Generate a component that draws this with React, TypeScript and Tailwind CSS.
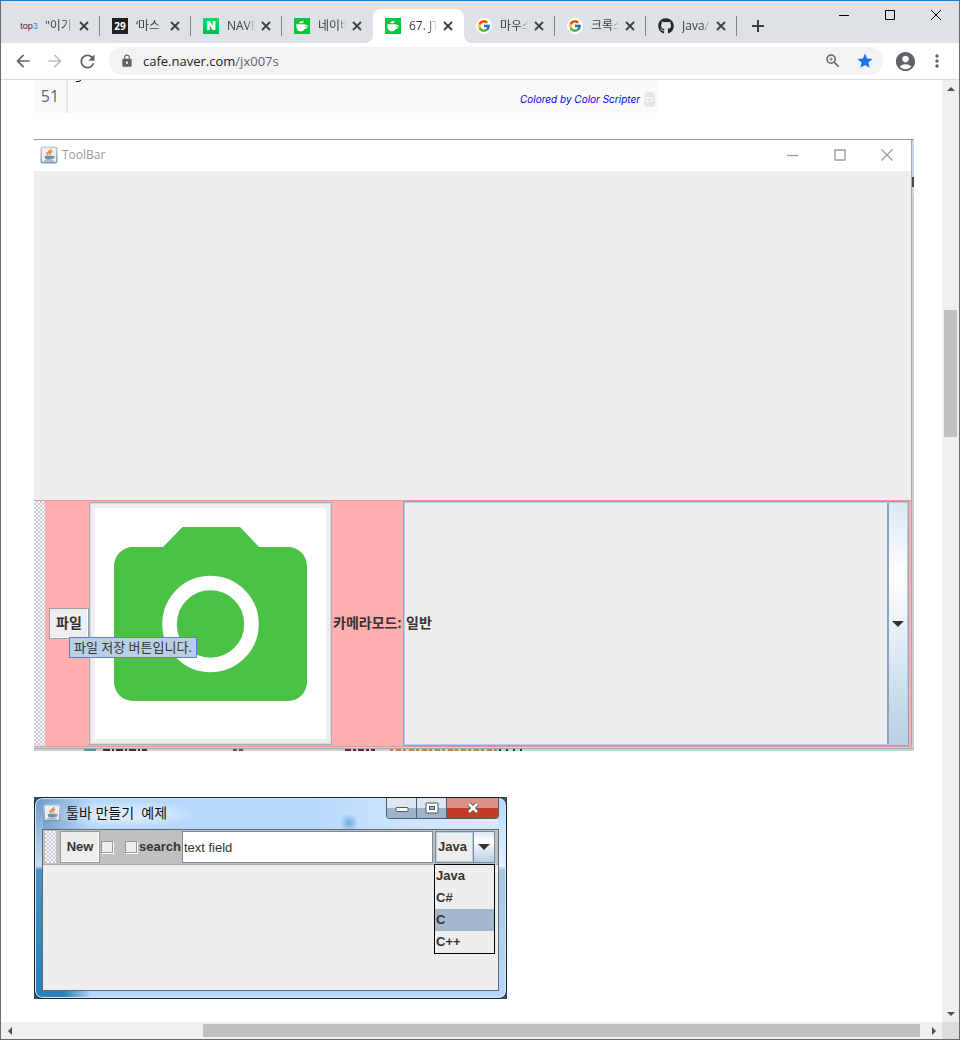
import type { ReactNode } from 'react';
import {
  MdArrowBack,
  MdArrowForward,
  MdRefresh,
  MdLock,
  MdZoomIn,
  MdStar,
  MdAccountCircle,
  MdMoreVert,
} from 'react-icons/md';
import { FcGoogle } from 'react-icons/fc';
import { FaGithub } from 'react-icons/fa';

const grip =
  'bg-[#f4f4f4] bg-[conic-gradient(#c6ccd1_25%,#f8f8f8_0_50%,#c6ccd1_0_75%,#f8f8f8_0)] bg-[size:4px_4px]';

function CafeIcon() {
  return (
    <svg viewBox="0 0 16 16" className="size-4 shrink-0" aria-hidden="true">
      <rect width="16" height="16" fill="#03c73c" />
      <path
        d="M2.4 6.2h9v.9c1.2-.5 2.4 0 2.3 1.2-.1 1.5-1.5 2.5-3 2.7-.9 1.6-2.1 2.3-3.8 2.3-2.9 0-4.5-2.2-4.5-5.3z"
        fill="#fff"
      />
      <circle cx="12" cy="8.5" r=".7" fill="#03c73c" />
      <path d="M5.2 5.200c.1-1.700 1.500-1.200 1.900-2.500.9.9 1.800.4 2.500-.2.1 1.700-.6 2.700-2 2.700z" fill="#fff" />
    </svg>
  );
}

function JavaIcon() {
  return (
    <svg viewBox="0 0 18 18" className="size-[18px] shrink-0" aria-hidden="true">
      <defs>
        <linearGradient id="javaFrame" x1="0" y1="0" x2="0" y2="1">
          <stop offset="0" stopColor="#c3d2df" />
          <stop offset="1" stopColor="#8096a8" />
        </linearGradient>
      </defs>
      <rect x=".5" y=".5" width="17" height="17" rx="2" fill="url(#javaFrame)" />
      <rect x="2" y="2" width="14" height="14" rx="1" fill="#eef1f4" />
      <path
        d="M10.800 3c.6 1.600-3.800 2.500-2.300 4.800M12.300 5.300c-2.200.9-3 1.700-2 3.600M7.300 6.300c-.7 1-.2 1.900.7 2.700"
        stroke="#ee8a3a"
        strokeWidth="1.600"
        fill="none"
      />
      <path d="M4.800 9.800h8v1.700c0 1.500-1.300 2.200-4 2.200s-4-.7-4-2.200z" fill="#6f8ea8" />
      <path d="M12.500 10.300c2.500-.4 2.200 2.200-.4 2.400M3.800 15h10" stroke="#6f8ea8" strokeWidth="1.200" fill="none" />
    </svg>
  );
}

function GoogleIcon() {
  return (
    <span className="flex size-4 shrink-0 items-center justify-center rounded-full bg-white">
      <FcGoogle size={14} />
    </span>
  );
}

function TabItem({ icon, title, active = false, divider = true }: {
  icon: ReactNode;
  title: string;
  active?: boolean;
  divider?: boolean;
}) {
  return (
    <div
      role="tab"
      aria-selected={active}
      className={
        'relative flex h-[34px] w-[91px] shrink-0 items-center pl-3 pr-2 ' + (active ? 'rounded-t-lg bg-white' : '')
      }
    >
      {icon}
      <span className="ml-2 w-7 overflow-hidden whitespace-nowrap text-[12px] leading-4 text-[#3c4043] [mask-image:linear-gradient(to_right,black_70%,transparent)]">
        {title}
      </span>
      <button aria-label="Close tab" className="ml-auto flex size-4 items-center justify-center">
        <svg viewBox="0 0 10 10" className="size-[10px]">
          <path d="M1 1l8 8M9 1L1 9" stroke="#3c4043" strokeWidth="1.800" />
        </svg>
      </button>
      {divider && <span className="absolute right-0 top-[7px] h-5 w-px bg-[#80868b]" />}
      {active && (
        <svg viewBox="0 0 107 8" className="absolute -left-2 bottom-0 h-2 w-[107px]" aria-hidden="true">
          <path d="M0 8a8 8 0 0 0 8-8v8zM107 8a8 8 0 0 1-8-8v8z" fill="#fff" />
        </svg>
      )}
    </div>
  );
}

function TabStrip() {
  return (
    <header className="flex h-[42px] items-start justify-between bg-[#dee1e6]">
      <div className="flex items-center pl-2 pt-2" role="tablist">
        <TabItem
          icon={
            <span className="flex size-4 shrink-0 items-center justify-center font-['Liberation_Sans',sans-serif] text-[9px] leading-4 text-[#333]">
              top<span className="text-[#2f7df6]">3</span>
            </span>
          }
          title={'"이기'}
        />
        <TabItem
          icon={
            <span className="flex size-4 shrink-0 items-center justify-center bg-[#231f20] text-[10px] font-bold leading-4 text-white">
              29
            </span>
          }
          title="‘마스"
        />
        <TabItem
          icon={
            <span className="flex size-4 shrink-0 items-center justify-center bg-linear-to-b from-[#06e06a] to-[#08b955] font-[Inter] text-[12px] font-black leading-4 text-white">
              N
            </span>
          }
          title="NAVE"
        />
        <TabItem icon={<CafeIcon />} title="네이버" divider={false} />
        <TabItem icon={<CafeIcon />} title="67. JT" active divider={false} />
        <TabItem icon={<GoogleIcon />} title="마우스" />
        <TabItem icon={<GoogleIcon />} title="크록스" />
        <TabItem icon={<FaGithub className="size-4 shrink-0 text-[#24292e]" />} title="Java/" />
        <button aria-label="New tab" className="ml-[11px] flex size-5 items-center justify-center">
          <svg viewBox="0 0 12 12" className="size-3">
            <path d="M6 0v12M0 6h12" stroke="#3c4043" strokeWidth="2" />
          </svg>
        </button>
      </div>
      <div className="flex">
        <button aria-label="Minimize" className="flex h-7 w-[46px] items-center justify-center">
          <svg viewBox="0 0 10 10" className="size-[10px]"><path d="M0 5.500h10" stroke="#000" /></svg>
        </button>
        <button aria-label="Maximize" className="flex h-7 w-[46px] items-center justify-center">
          <svg viewBox="0 0 10 10" className="size-[10px]"><path d="M.5.5h9v9h-9z" fill="none" stroke="#000" /></svg>
        </button>
        <button aria-label="Close" className="flex h-7 w-[46px] items-center justify-center">
          <svg viewBox="0 0 10 10" className="size-[10px]"><path d="M0 0l10 10M10 0L0 10" stroke="#000" /></svg>
        </button>
      </div>
    </header>
  );
}

function AddressBar() {
  const nav = 'flex size-8 items-center justify-center text-[#5f6368]';
  return (
    <nav className="flex h-[37px] items-center border-b border-[#dadce0] bg-white px-[6px]">
      <button aria-label="Back" className={nav}><MdArrowBack size={20} /></button>
      <button aria-label="Forward" className="flex size-8 items-center justify-center text-[#bcbec1]">
        <MdArrowForward size={20} />
      </button>
      <button aria-label="Reload" className={nav}><MdRefresh size={21} /></button>
      <div className="mx-[6px] flex h-7 flex-1 items-center rounded-full bg-[#f1f3f4] pl-[11px] pr-[9px] text-[#5f6368]">
        <MdLock size={14} />
        <a href="#cafe" className="ml-[9px] flex-1 text-[13px] leading-5">
          <span className="text-[#202124]">cafe.naver.com</span>/jx007s
        </a>
        <button aria-label="Zoom" className="mr-[14px]"><MdZoomIn size={18} /></button>
        <button aria-label="Bookmark" className="text-[#1a73e8]"><MdStar size={18} /></button>
      </div>
      <button aria-label="Profile" className={nav}><MdAccountCircle size={23} /></button>
      <button aria-label="Menu" className={nav}><MdMoreVert size={20} /></button>
    </nav>
  );
}

function CodeTail() {
  return (
    <div className="relative flex h-[33px] w-[624px] rounded-b bg-[#fafafa]">
      <span className="w-[34px] border-r-2 border-[#e5e5e5] text-center text-[16px] leading-8 text-[#666]">51</span>
      <svg viewBox="0 0 5 2" className="ml-2 h-[2px] w-[5px]" aria-hidden="true">
        <path d="M5 0L3 1.500H0" stroke="#000" fill="none" />
      </svg>
      <div className="ml-auto flex items-center gap-1 pr-[3px] pt-[5px]">
        <a href="#scripter" className="font-[Inter,sans-serif] text-[10px] italic leading-4 text-[#0000ee]">
          Colored by Color Scripter
        </a>
        <span className="flex h-[15px] w-[11px] items-center justify-center rounded bg-[#e5e5e5] text-[9px] leading-3 text-white">
          cs
        </span>
      </div>
    </div>
  );
}

function ToolBarWindow() {
  return (
    <section className="w-[880px] border-t border-[#9598a0]">
      <div className="flex">
        <div className="min-w-0 flex-1">
          <div className="flex h-[31px] items-center bg-white pb-px pl-[6px] pr-px">
            <JavaIcon />
            <h2 className="ml-1 flex-1 text-[12px] leading-4 text-[#999]">ToolBar</h2>
            <button aria-label="Minimize" className="flex h-7 w-[47px] items-center justify-center">
              <svg viewBox="0 0 12 12" className="size-3"><path d="M0 6.500h11" stroke="#999" strokeWidth="1.300" /></svg>
            </button>
            <button aria-label="Maximize" className="flex h-7 w-[47px] items-center justify-center">
              <svg viewBox="0 0 12 12" className="size-3"><path d="M1 1h10v10H1z" fill="none" stroke="#999" strokeWidth="1.300" /></svg>
            </button>
            <button aria-label="Close" className="flex h-7 w-[47px] items-center justify-center">
              <svg viewBox="0 0 12 12" className="size-3"><path d="M.5.5l11 11M11.500.5l-11 11" stroke="#999" strokeWidth="1.300" /></svg>
            </button>
          </div>
          <div className="h-[329px] bg-[#eeeeee]" />
          <div className="flex h-[247px] items-center border-y border-[#e6999c] bg-[#ffafaf] pr-[2px]">
            <div className={'h-full w-[11px] ' + grip} />
            <div className="relative ml-1">
              <button className="h-[31px] w-10 border border-[#98a0a8] bg-[#eeeeee] pb-[2px] text-[14px] font-bold leading-5 text-[#333] shadow-[inset_-1px_-1px_0_#fff]">
                파일
              </button>
              <div
                role="tooltip"
                className="absolute left-5 top-[29px] z-10 h-[21px] whitespace-nowrap border border-[#6382bf] bg-[#b8cfe5] px-1 text-[13px] leading-[18px] text-[#333]"
              >
                파일 저장 버튼입니다.
              </div>
            </div>
            <button
              aria-label="Camera"
              className="flex h-[243px] w-[243px] items-center justify-center border border-[#a9b1b6] bg-[#eeeeee] shadow-[inset_0_0_0_1px_#d5dadd]"
            >
              <svg viewBox="0 0 231 231" className="size-[231px]">
                <rect width="231" height="231" fill="#fff" />
                <path
                  d="M38 39h30l19.500-20H145l19 20h29a19 19 0 0 1 19 19v116a19 19 0 0 1-19 19H38a19 19 0 0 1-19-19V58a19 19 0 0 1 19-19z"
                  fill="#4bc145"
                />
                <circle cx="115.500" cy="116" r="41" fill="none" stroke="#fff" strokeWidth="14.500" />
              </svg>
            </button>
            <label
              htmlFor="mode"
              className="w-[71px] whitespace-nowrap pb-[2px] pl-px text-[14px] font-bold leading-5 text-[#333]"
            >
              카메라모드:
            </label>
            <div className="flex h-full flex-1 border border-[#8ea6bd] bg-[#b8cfe5] p-px">
              <select
                id="mode"
                className="min-w-0 flex-1 appearance-none bg-[#eeeeee] pb-[2px] pl-px text-[14px] font-bold leading-5 text-[#333] outline-none"
              >
                <option>일반</option>
              </select>
              <span className="flex w-5 items-center justify-center border-l-2 border-[#8ea6bd] bg-linear-to-b from-[#dce7f3] via-white via-30% to-[#b8cfe5]">
                <svg viewBox="0 0 12 6" className="h-[6px] w-3"><path d="M0 0h12L6 6z" fill="#333" /></svg>
              </span>
            </div>
          </div>
        </div>
        <div className="w-[3px] border-l border-[#a8a8ac] bg-[linear-gradient(180deg,#cbd3e6_37px,#5a4040_37px_47px,#c6d6e8_47px_56px,#cccccc_56px)]" />
      </div>
      <svg viewBox="0 0 880 4" preserveAspectRatio="none" className="block h-1 w-full" aria-hidden="true">
        <rect width="880" height="4" fill="#d0d0d0" />
        <path d="M0 1.500h880" stroke="#a8a8a8" />
        <path d="M50 3h12" stroke="#4a9aa8" strokeWidth="2" />
        <path d="M69 3h44" stroke="#333" strokeWidth="2" strokeDasharray="7 2 2 2" />
        <path d="M199 3h10" stroke="#555" strokeWidth="2" strokeDasharray="4 2" />
        <path d="M311 3h30" stroke="#6a1f5a" strokeWidth="2" strokeDasharray="6 2 3 2" />
        <path d="M356 3h108" stroke="#cf7a4a" strokeWidth="2" strokeDasharray="3 3 5 2" />
        <path d="M465 3h28" stroke="#333" strokeWidth="2" strokeDasharray="2 5" />
      </svg>
    </section>
  );
}

function CheckSquare({ id, label }: { id: string; label: string }) {
  return (
    <input
      id={id}
      type="checkbox"
      aria-label={label}
      className="size-3 shrink-0 appearance-none border border-[#999] bg-[#eeeeee] shadow-[1px_1px_0_#fff]"
    />
  );
}

function ExampleWindow() {
  const languages = ['Java', 'C#', 'C', 'C++'];
  return (
    <section className="mt-[46px] w-[473px] bg-[#3a4d5e]">
      <div className="rounded-lg border border-[#17222c] px-[7px] pb-[7px] shadow-[inset_0_0_0_1px_#d3e9fc] [background:linear-gradient(180deg,#6f9ac9_0%,#c9def2_34%,#4a90c4_36%,#2a80b8_100%)_0_0/8px_100%_no-repeat,linear-gradient(180deg,#b7d8fb_0%,#e6f1fc_34%,#a9c6e0_36%,#b7d8fb_100%)_100%_0/8px_100%_no-repeat,linear-gradient(90deg,#2a80b8_0%,#2a80b8_6%,#b7d8fb_12%)_0_100%/100%_8px_no-repeat,radial-gradient(circle_at_314px_25px,#6ea9e2_0px,transparent_9px),radial-gradient(ellipse_at_90px_16px,rgba(255,255,255,0.5)_20%,transparent_60%)_0_0/180px_32px_no-repeat,linear-gradient(90deg,#6f9ac9_0%,#b7d8fb_12%,#b7d8fb_58%,#cfe6fd_80%,#d8ebfd_100%)]">
        <div className="flex h-[31px] items-start">
          <div className="flex flex-1 items-center pl-px pt-[5px]">
            <JavaIcon />
            <h2 className="ml-[5px] whitespace-pre text-[14px] leading-5 text-[#111]">툴바 만들기  예제</h2>
          </div>
          <div className="flex h-[21px] overflow-hidden rounded-b border border-t-0 border-[#4d5d6e]">
            <button
              aria-label="Minimize"
              className="flex w-[30px] items-center justify-center border-r border-[#4d5d6e] bg-linear-to-b from-[#dbe6f1] from-50% to-[#9fb4ca] to-50%"
            >
              <svg viewBox="0 0 14 12" className="h-3 w-[14px]"><rect x="1" y="5.500" width="12" height="4" rx=".5" fill="#fff" stroke="#555" /></svg>
            </button>
            <button
              aria-label="Maximize"
              className="flex w-[30px] items-center justify-center border-r border-[#4d5d6e] bg-linear-to-b from-[#dbe6f1] from-50% to-[#9fb4ca] to-50%"
            >
              <svg viewBox="0 0 14 12" className="h-3 w-[14px]">
                <rect x="1" y="1" width="12" height="10" rx=".5" fill="#fff" stroke="#555" />
                <rect x="4.500" y="4.500" width="5" height="3" fill="#9fb4ca" stroke="#555" />
              </svg>
            </button>
            <button
              aria-label="Close"
              className="flex w-[51px] items-center justify-center bg-linear-to-b from-[#dd9186] from-50% to-[#c23c28] to-50%"
            >
              <svg viewBox="0 0 14 12" className="h-3 w-[14px]">
                <path d="M3 2l8 8M11 2l-8 8" stroke="#555" strokeWidth="4.500" />
                <path d="M3 2l8 8M11 2l-8 8" stroke="#fff" strokeWidth="2.500" />
              </svg>
            </button>
          </div>
        </div>
        <div className="border border-[#5d6a78] bg-[#eeeeee] font-['Liberation_Sans','Noto_Sans_CJK_KR',sans-serif] text-[13px] leading-5 text-[#333]">
          <div className="flex h-[35px] items-center border-b border-[#aaa] bg-[#c0c0c0] pl-[2px] pr-[3px]">
            <div className={'h-8 w-[11px] ' + grip} />
            <button className="ml-1 h-8 w-10 border border-[#999] bg-[#eeeeee] text-[13px] font-bold leading-5 shadow-[inset_-1px_-1px_0_#fff]">
              New
            </button>
            <span className="ml-px mr-3 flex"><CheckSquare id="plain" label="Option" /></span>
            <CheckSquare id="search" label="search" />
            <label htmlFor="search" className="ml-[2px] font-bold">search</label>
            <input
              aria-label="text field"
              defaultValue="text field"
              className="ml-px h-8 min-w-0 flex-1 border border-[#7a8a99] bg-white pl-px text-[13px] leading-5 outline-none"
            />
            <div className="relative ml-[2px] flex h-8 w-[60px] border border-[#7a8a99]">
              <select
                aria-label="Language"
                className="w-[37px] appearance-none border border-[#b8cfe5] bg-[#eeeeee] pl-px text-[13px] font-bold leading-5 outline-none"
              >
                {languages.map((name) => (
                  <option key={name}>{name}</option>
                ))}
              </select>
              <span className="flex flex-1 items-center justify-center border-l border-[#7a8a99] bg-linear-to-b from-[#dce7f3] via-white via-30% to-[#b8cfe5]">
                <svg viewBox="0 0 12 6" className="h-[6px] w-3"><path d="M0 0h12L6 6z" fill="#333" /></svg>
              </span>
              <ul role="listbox" className="absolute -left-[2px] top-8 w-[61px] border border-black bg-[#eeeeee] font-bold">
                {languages.map((name) => (
                  <li
                    key={name}
                    role="option"
                    aria-selected={name === 'C'}
                    className={'h-[22px] pl-px leading-[22px] ' + (name === 'C' ? 'bg-[#a3b8cc]' : '')}
                  >
                    {name}
                  </li>
                ))}
              </ul>
            </div>
          </div>
          <div className="h-[125px]" />
        </div>
      </div>
    </section>
  );
}

function Arrow({ d }: { d: string }) {
  return (
    <svg viewBox="0 0 8 8" className="size-2 shrink-0" aria-hidden="true">
      <path d={d} fill="#505050" />
    </svg>
  );
}

export default function App() {
  return (
    <div className="flex min-h-screen flex-col border border-t-[#1883d7] border-[#6b6b6b] bg-white font-['Open_Sans','Noto_Sans_CJK_KR',sans-serif]">
      <TabStrip />
      <AddressBar />
      <div className="flex flex-1">
        <main className="min-w-0 flex-1 overflow-hidden pb-5 pl-[33px]">
          <CodeTail />
          <div className="mt-[26px]">
            <ToolBarWindow />
          </div>
          <ExampleWindow />
        </main>
        <div className="flex w-[17px] flex-col items-center bg-[#f0f0f0]">
          <span className="flex h-[17px] items-center"><Arrow d="M0 6l4-4 4 4z" /></span>
          <span className="grow-[213] basis-0" />
          <span className="w-[13px] grow-[127] basis-0 bg-[#c1c1c1]" />
          <span className="grow-[568] basis-0" />
          <span className="flex h-[17px] items-center"><Arrow d="M0 2l4 4 4-4z" /></span>
        </div>
      </div>
      <div className="flex h-[17px] bg-[#dcdcdc] pr-[17px]">
        <div className="flex flex-1 items-center bg-[#f0f0f0]">
          <span className="flex w-[17px] justify-center"><Arrow d="M6 0L2 4l4 4z" /></span>
          <span className="grow-[185] basis-0" />
          <span className="h-[13px] grow-[717] basis-0 bg-[#c1c1c1]" />
          <span className="grow-[5] basis-0" />
          <span className="flex w-[17px] justify-center"><Arrow d="M2 0l4 4-4 4z" /></span>
        </div>
      </div>
    </div>
  );
}
